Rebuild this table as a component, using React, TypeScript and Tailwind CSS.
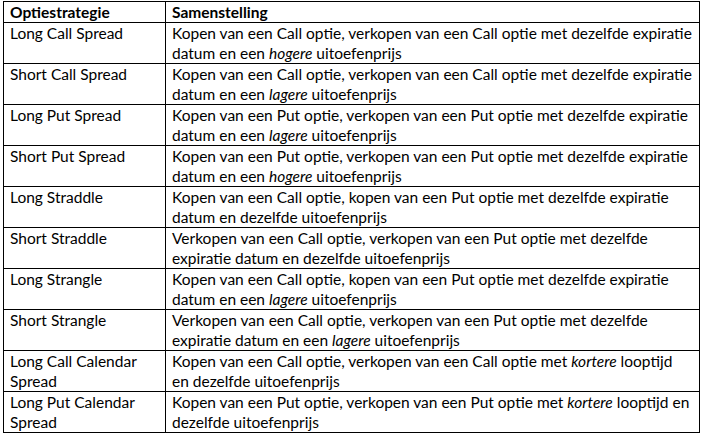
import React from "react";

type Row = {
  name: React.ReactNode;
  text: React.ReactNode;
};

const rows: Row[] = [
  {
    name: "Long Call Spread",
    text: (
      <>
        Kopen van een Call optie, verkopen van een Call optie met dezelfde expiratie datum en een <em>hogere</em> uitoefenprijs
      </>
    ),
  },
  {
    name: "Short Call Spread",
    text: (
      <>
        Kopen van een Call optie, verkopen van een Call optie met dezelfde expiratie datum en een <em>lagere</em> uitoefenprijs
      </>
    ),
  },
  {
    name: "Long Put Spread",
    text: (
      <>
        Kopen van een Put optie, verkopen van een Put optie met dezelfde expiratie datum en een <em>lagere</em> uitoefenprijs
      </>
    ),
  },
  {
    name: "Short Put Spread",
    text: (
      <>
        Kopen van een Put optie, verkopen van een Put optie met dezelfde expiratie datum en een <em>hogere</em> uitoefenprijs
      </>
    ),
  },
  {
    name: "Long Straddle",
    text: <>Kopen van een Call optie, kopen van een Put optie met dezelfde expiratie datum en dezelfde uitoefenprijs</>,
  },
  {
    name: "Short Straddle",
    text: <>Verkopen van een Call optie, verkopen van een Put optie met dezelfde expiratie datum en dezelfde uitoefenprijs</>,
  },
  {
    name: "Long Strangle",
    text: (
      <>
        Kopen van een Call optie, kopen van een Put optie met dezelfde expiratie datum en een <em>lagere</em> uitoefenprijs
      </>
    ),
  },
  {
    name: "Short Strangle",
    text: (
      <>
        Verkopen van een Call optie, verkopen van een Put optie met dezelfde expiratie datum en een <em>lagere</em> uitoefenprijs
      </>
    ),
  },
  {
    name: "Long Call Calendar Spread",
    text: (
      <>
        Kopen van een Call optie, verkopen van een Call optie met <em>kortere</em> looptijd en dezelfde uitoefenprijs
      </>
    ),
  },
  {
    name: "Long Put Calendar Spread",
    text: (
      <>
        Kopen van een Put optie, verkopen van een Put optie met <em>kortere</em> looptijd en dezelfde uitoefenprijs
      </>
    ),
  },
];

export default function App() {
  return (
    <div
      className="w-[701px] h-[435px] bg-white pl-[3px] pt-[1px] text-[15.5px] leading-[20px] text-black"
      style={{ fontFamily: "Lato, 'Open Sans', sans-serif" }}
    >
      <table className="w-[697px] border-collapse table-fixed">
        <colgroup>
          <col className="w-[162px]" />
          <col />
        </colgroup>
        <thead>
          <tr className="h-[21px]">
            <th className="border border-black px-[6px] text-left font-bold align-top">Optiestrategie</th>
            <th className="border border-black px-[6px] text-left font-bold align-top">Samenstelling</th>
          </tr>
        </thead>
        <tbody>
          {rows.map((r, i) => (
            <tr key={i} className="h-[41px]">
              <td className="border border-black px-[6px] align-top">{r.name}</td>
              <td className="border border-black px-[6px] align-top">{r.text}</td>
            </tr>
          ))}
        </tbody>
      </table>
    </div>
  );
}
